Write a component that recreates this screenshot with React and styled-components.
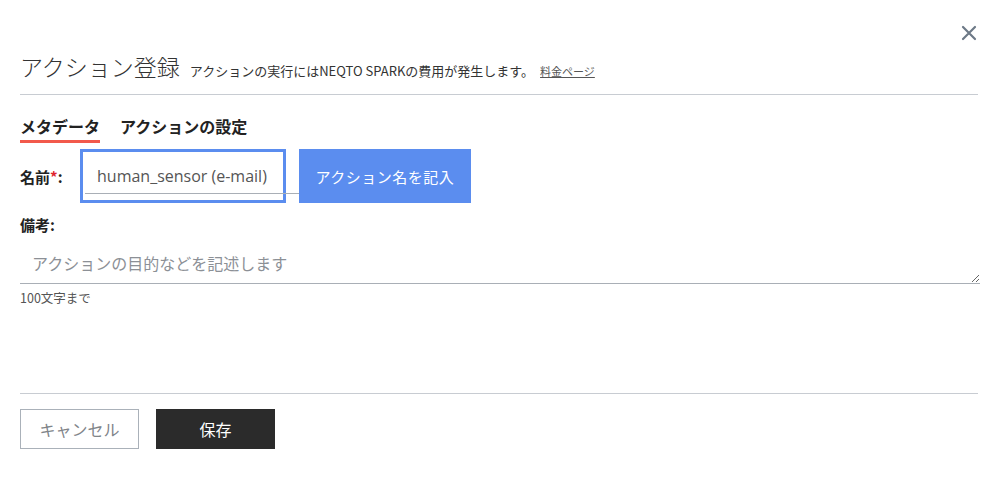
import React from "react";
import styled, { createGlobalStyle } from "styled-components";

const Global = createGlobalStyle`
  body {
    margin: 0;
    background: #fff;
    font-family: "Noto Sans CJK JP", "Open Sans", sans-serif;
    color: #333;
  }
`;

const Page = styled.div`
  padding: 0 20px 0 20px;
  width: 1000px;
  box-sizing: border-box;
`;

const TopBar = styled.div`
  display: flex;
  justify-content: flex-end;
  height: 50px;
  padding-top: 24px;
  box-sizing: border-box;
  padding-right: 2px;
`;

const CloseButton = styled.button`
  border: none;
  background: none;
  padding: 0;
  width: 18px;
  height: 18px;
  cursor: pointer;
  display: flex;
  align-items: center;
  justify-content: center;
`;

const Header = styled.div`
  display: flex;
  align-items: baseline;
  gap: 10px;
  height: 45px;
  border-bottom: 1px solid #c8ccd2;
  box-sizing: border-box;
  margin-right: 2px;
`;

const Title = styled.h1`
  margin: 0;
  font-size: 23px;
  font-weight: 300;
  color: #333;
  line-height: 32px;
`;

const Note = styled.span`
  font-size: 13px;
  color: #333;
`;

const PriceLink = styled.a`
  font-size: 11px;
  color: #555;
  text-decoration: underline;
  margin-left: -4px;
`;

const Tabs = styled.div`
  display: flex;
  gap: 20px;
  margin-top: 19px;
`;

const Tab = styled.div`
  font-size: 16px;
  font-weight: 700;
  color: #222;
  padding-bottom: 2px;
  line-height: 24px;
  border-bottom: 3px solid ${p => (p.$active ? "#f2594b" : "transparent")};
`;

const NameRow = styled.div`
  display: flex;
  align-items: center;
  margin-top: 6px;
`;

const Label = styled.label`
  font-size: 15px;
  font-weight: 700;
  color: #222;
  width: 60px;
`;

const Star = styled.span`
  color: #e0242f;
`;

const InputWrap = styled.div`
  position: relative;
  width: 206px;
  height: 54px;
  border: 3px solid #5b8def;
  box-sizing: border-box;
`;

const NameInput = styled.input`
  width: 100%;
  height: 100%;
  border: none;
  outline: none;
  padding: 0 0 0 14px;
  box-sizing: border-box;
  font-family: "Open Sans", sans-serif;
  font-size: 16px;
  color: #555;
  background: transparent;
`;

const Underline = styled.div`
  position: absolute;
  left: 2px;
  right: -16px;
  bottom: 6px;
  height: 1px;
  background: #a9afb6;
`;

const FillButton = styled.button`
  margin-left: 13px;
  width: 172px;
  height: 54px;
  border: none;
  background: #5b8def;
  color: #fff;
  font-family: "Noto Sans CJK JP", sans-serif;
  font-size: 15px;
  letter-spacing: 0.5px;
`;

const MemoLabel = styled(Label)`
  display: block;
  margin-top: 12px;
  line-height: 20px;
`;

const MemoWrap = styled.div`
  position: relative;
  margin-top: 13px;
  border-bottom: 1px solid #a9afb6;
`;

const Memo = styled.textarea`
  display: block;
  width: 100%;
  height: 35px;
  border: none;
  outline: none;
  resize: vertical;
  padding: 3px 12px 0;
  box-sizing: border-box;
  font-family: "Noto Sans CJK JP", sans-serif;
  font-size: 16px;
  color: #333;
  &::placeholder {
    color: #8c9096;
  }
`;

const Hint = styled.div`
  font-size: 12.5px;
  color: #555;
  margin-top: 4px;
`;

const Footer = styled.div`
  margin-top: 86px;
  border-top: 1px solid #c8ccd2;
  margin-right: 2px;
  padding-top: 15px;
  display: flex;
  gap: 17px;
`;

const FooterButton = styled.button`
  width: 119px;
  height: 40px;
  box-sizing: border-box;
  font-family: "Noto Sans CJK JP", sans-serif;
  font-size: 16px;
  border: 1px solid ${p => (p.$primary ? "#2b2b2b" : "#aab1b9")};
  background: ${p => (p.$primary ? "#2b2b2b" : "#fff")};
  color: ${p => (p.$primary ? "#fff" : "#808489")};
`;

export default function App() {
  return (
    <Page>
      <Global />
      <TopBar>
        <CloseButton aria-label="close">
          <svg width="16" height="16" viewBox="0 0 16 16">
            <path
              d="M2 2 L14 14 M14 2 L2 14"
              stroke="#6d7987"
              strokeWidth="2.2"
              strokeLinecap="round"
            />
          </svg>
        </CloseButton>
      </TopBar>
      <Header>
        <Title>アクション登録</Title>
        <Note>アクションの実行にはNEQTO SPARKの費用が発生します。</Note>
        <PriceLink>料金ページ</PriceLink>
      </Header>
      <Tabs>
        <Tab $active>メタデータ</Tab>
        <Tab>アクションの設定</Tab>
      </Tabs>
      <NameRow>
        <Label>
          名前<Star>*</Star>:
        </Label>
        <InputWrap>
          <NameInput defaultValue="human_sensor (e-mail)" />
          <Underline />
        </InputWrap>
        <FillButton>アクション名を記入</FillButton>
      </NameRow>
      <MemoLabel>備考:</MemoLabel>
      <MemoWrap>
        <Memo placeholder="アクションの目的などを記述します" />
      </MemoWrap>
      <Hint>100文字まで</Hint>
      <Footer>
        <FooterButton>キャンセル</FooterButton>
        <FooterButton $primary>保存</FooterButton>
      </Footer>
    </Page>
  );
}
